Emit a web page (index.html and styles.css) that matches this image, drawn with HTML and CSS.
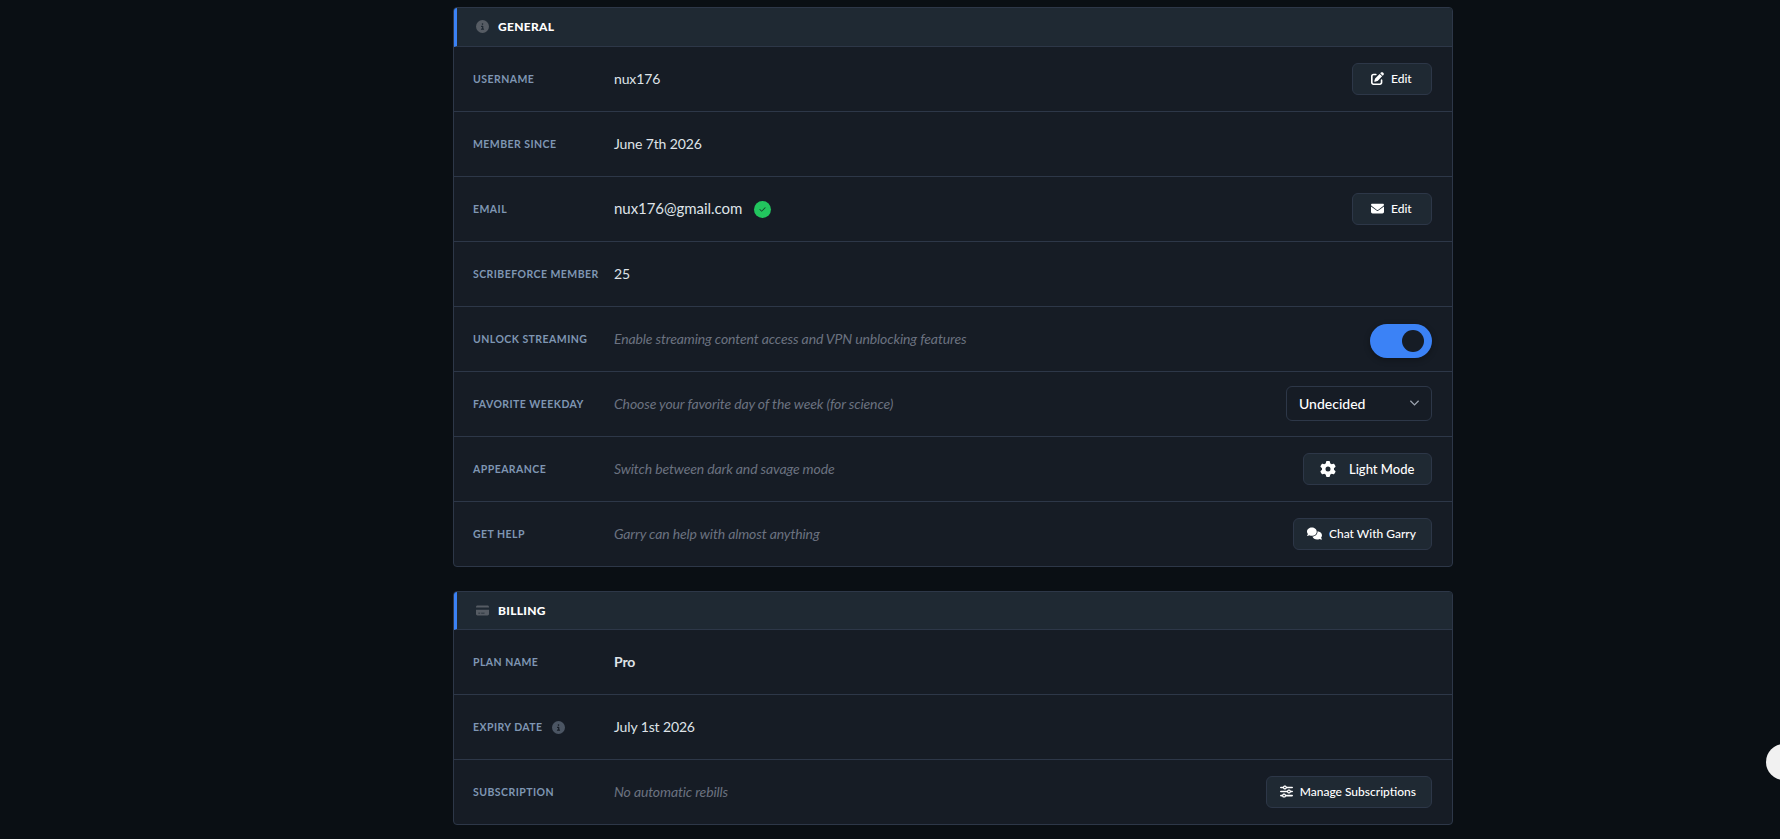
FILE: index.html
```html
<!DOCTYPE html>
<html lang="en">
<head>
    <meta charset="UTF-8">
    <meta name="viewport" content="width=device-width, initial-scale=1.0">
    <title>Account</title>
    <link rel="stylesheet" href="styles.css">
</head>
<body>

    <main class="page">

        <!-- General -->
        <section class="card">
            <header class="card-head">
                <svg class="head-icon" viewBox="0 0 512 512"><path d="M256 512A256 256 0 1 0 256 0a256 256 0 1 0 0 512zM216 336h24V272H216c-13.3 0-24-10.7-24-24s10.7-24 24-24h48c13.3 0 24 10.7 24 24v88h8c13.3 0 24 10.7 24 24s-10.7 24-24 24H216c-13.3 0-24-10.7-24-24s10.7-24 24-24zm40-208a32 32 0 1 1 0 64 32 32 0 1 1 0-64z"/></svg>
                <h2>General</h2>
            </header>
            <div class="row">
                <span class="label">Username</span>
                <span class="value">nux176</span>
                <button class="btn btn-edit" type="button">
                    <svg class="btn-icon" viewBox="0 0 512 512"><path d="M471.6 21.7c-21.9-21.9-57.3-21.9-79.2 0L362.3 51.7l97.9 97.9 30.1-30.1c21.9-21.9 21.9-57.3 0-79.2L471.6 21.7zm-299.2 220c-6.1 6.1-10.8 13.6-13.5 21.9l-29.6 88.8c-2.9 8.6-.6 18.1 5.8 24.6s15.9 8.7 24.6 5.8l88.8-29.6c8.2-2.7 15.7-7.4 21.9-13.5L437.7 172.3 339.7 74.3 172.4 241.7zM96 64C43 64 0 107 0 160V416c0 53 43 96 96 96H352c53 0 96-43 96-96V320c0-17.7-14.3-32-32-32s-32 14.3-32 32v96c0 17.7-14.3 32-32 32H96c-17.7 0-32-14.3-32-32V160c0-17.7 14.3-32 32-32h96c17.7 0 32-14.3 32-32s-14.3-32-32-32H96z"/></svg>
                    Edit
                </button>
            </div>
            <div class="row">
                <span class="label">Member Since</span>
                <span class="value">June 7th 2026</span>
            </div>
            <div class="row">
                <span class="label">Email</span>
                <span class="value email">nux176@gmail.com</span>
                <span class="verified">
                    <svg viewBox="0 0 512 512"><path d="M470.6 105.4c12.5 12.5 12.5 32.8 0 45.3l-256 256c-12.5 12.5-32.8 12.5-45.3 0l-128-128c-12.5-12.5-12.5-32.8 0-45.3s32.8-12.5 45.3 0L192 338.7 425.4 105.4c12.5-12.5 32.8-12.5 45.3 0z"/></svg>
                </span>
                <button class="btn btn-edit" type="button">
                    <svg class="btn-icon" viewBox="0 0 512 512"><path d="M48 64C21.5 64 0 85.5 0 112c0 15.1 7.1 29.3 19.2 38.4L236.8 313.6c11.4 8.5 27 8.5 38.4 0L492.8 150.4c12.1-9.1 19.2-23.3 19.2-38.4c0-26.5-21.5-48-48-48H48zM0 176V384c0 35.3 28.7 64 64 64H448c35.3 0 64-28.7 64-64V176L294.4 339.2c-22.8 17.1-54 17.1-76.8 0L0 176z"/></svg>
                    Edit
                </button>
            </div>
            <div class="row">
                <span class="label">Scribeforce Member</span>
                <span class="value">25</span>
            </div>
            <div class="row">
                <span class="label">Unlock Streaming</span>
                <span class="hint">Enable streaming content access and VPN unblocking features</span>
                <span class="toggle"><span class="knob"></span></span>
            </div>
            <div class="row">
                <span class="label">Favorite Weekday</span>
                <span class="hint">Choose your favorite day of the week (for science)</span>
                <div class="select-wrap">
                    <select class="select">
                        <option>Undecided</option>
                    </select>
                    <svg class="chevron" viewBox="0 0 12 8"><path d="M1.5 1.5 6 6l4.500-4.500"/></svg>
                </div>
            </div>
            <div class="row">
                <span class="label">Appearance</span>
                <span class="hint">Switch between dark and savage mode</span>
                <button class="btn btn-light" type="button">
                    <svg class="btn-icon gear" viewBox="0 0 512 512"><path d="M495.9 166.6c3.2 8.7 .5 18.4-6.4 24.6l-43.3 39.4c1.1 8.3 1.7 16.8 1.7 25.4s-.6 17.1-1.7 25.4l43.3 39.4c6.9 6.2 9.6 15.9 6.4 24.6c-4.4 11.9-9.7 23.3-15.8 34.3l-4.7 8.1c-6.6 11-14 21.4-22.1 31.2c-5.9 7.2-15.7 9.6-24.5 6.8l-55.7-17.7c-13.4 10.3-28.2 18.9-44 25.4l-12.5 57.1c-2 9.1-9 16.3-18.2 17.8c-13.8 2.3-28 3.5-42.5 3.5s-28.7-1.2-42.5-3.5c-9.2-1.5-16.2-8.7-18.2-17.8l-12.5-57.1c-15.8-6.5-30.6-15.1-44-25.4L83.1 425.9c-8.8 2.8-18.6 .3-24.5-6.8c-8.1-9.8-15.5-20.2-22.1-31.2l-4.7-8.1c-6.1-11-11.4-22.4-15.8-34.3c-3.2-8.7-.5-18.4 6.4-24.6l43.3-39.4C64.6 273.1 64 264.6 64 256s.6-17.1 1.7-25.4L22.4 191.2c-6.9-6.2-9.6-15.9-6.4-24.6c4.4-11.9 9.7-23.3 15.8-34.3l4.7-8.1c6.6-11 14-21.4 22.1-31.2c5.9-7.2 15.7-9.6 24.5-6.8l55.7 17.7c13.4-10.3 28.2-18.9 44-25.4l12.5-57.1c2-9.1 9-16.3 18.2-17.8C227.3 1.2 241.5 0 256 0s28.7 1.2 42.5 3.5c9.2 1.5 16.2 8.7 18.2 17.8l12.5 57.1c15.8 6.5 30.6 15.1 44 25.4l55.7-17.7c8.8-2.8 18.6-.3 24.5 6.8c8.1 9.8 15.5 20.2 22.1 31.2l4.7 8.1c6.1 11 11.4 22.4 15.8 34.3zM256 336a80 80 0 1 0 0-160 80 80 0 1 0 0 160z"/></svg>
                    Light Mode
                </button>
            </div>
            <div class="row">
                <span class="label">Get Help</span>
                <span class="hint">Garry can help with almost anything</span>
                <button class="btn btn-wide" type="button">
                    <svg class="btn-icon comments" viewBox="0 0 640 512"><path d="M208 352c114.900 0 208-78.800 208-176S322.900 0 208 0S0 78.800 0 176c0 38.600 14.700 74.300 39.600 103.400c-3.500 9.400-8.700 17.700-14.200 24.700c-4.800 6.200-9.700 11-13.300 14.300c-1.800 1.600-3.300 2.900-4.300 3.700c-.5 .4-.9 .7-1.100 .8l-.2 .2C1 327.200-1.400 334.400 .8 340.900S9.100 352 16 352c21.800 0 43.800-5.600 62.100-12.500c9.200-3.500 17.800-7.400 25.300-11.400C134.100 343.300 169.800 352 208 352zM448 176c0 112.300-99.100 196.900-216.500 207C255.800 457.400 336.400 512 432 512c38.200 0 73.900-8.700 104.700-23.900c7.500 4 16 7.900 25.200 11.400c18.300 6.900 40.300 12.500 62.100 12.500c6.900 0 13.100-4.500 15.200-11.100c2.100-6.600-.2-13.800-5.800-17.900l-.2-.2c-.2-.2-.6-.4-1.100-.8c-1-.8-2.500-2-4.300-3.700c-3.600-3.300-8.500-8.100-13.300-14.300c-5.500-7-10.700-15.400-14.200-24.700c24.900-29 39.600-64.700 39.600-103.400c0-92.800-84.900-168.900-192.600-175.500c.4 5.100 .6 10.300 .6 15.500z"/></svg>
                    Chat With Garry
                </button>
            </div>
        </section>

        <!-- Billing -->
        <section class="card">
            <header class="card-head">
                <svg class="head-icon" viewBox="0 0 576 512"><path d="M64 32C28.700 32 0 60.700 0 96v32H576V96c0-35.300-28.700-64-64-64H64zM576 224H0V416c0 35.300 28.700 64 64 64H512c35.300 0 64-28.700 64-64V224zM112 352h64c8.800 0 16 7.200 16 16s-7.200 16-16 16H112c-8.800 0-16-7.200-16-16s7.200-16 16-16zm112 16c0-8.800 7.200-16 16-16H368c8.800 0 16 7.200 16 16s-7.200 16-16 16H240c-8.800 0-16-7.200-16-16z"/></svg>
                <h2>Billing</h2>
            </header>
            <div class="row">
                <span class="label">Plan Name</span>
                <span class="value plan">Pro</span>
            </div>
            <div class="row">
                <span class="label">Expiry Date
                    <svg class="label-icon" viewBox="0 0 512 512"><path d="M256 512A256 256 0 1 0 256 0a256 256 0 1 0 0 512zM216 336h24V272H216c-13.300 0-24-10.700-24-24s10.700-24 24-24h48c13.300 0 24 10.700 24 24v88h8c13.300 0 24 10.700 24 24s-10.700 24-24 24H216c-13.300 0-24-10.700-24-24s10.700-24 24-24zm40-208a32 32 0 1 1 0 64 32 32 0 1 1 0-64z"/></svg>
                </span>
                <span class="value">July 1st 2026</span>
            </div>
            <div class="row">
                <span class="label">Subscription</span>
                <span class="hint">No automatic rebills</span>
                <button class="btn btn-wide" type="button">
                    <svg class="btn-icon" viewBox="0 0 512 512"><path d="M0 416c0 17.700 14.300 32 32 32l54.700 0c12.300 28.300 40.500 48 73.300 48s61-19.700 73.300-48L480 448c17.700 0 32-14.300 32-32s-14.300-32-32-32l-246.700 0c-12.300-28.300-40.500-48-73.300-48s-61 19.700-73.300 48L32 384c-17.700 0-32 14.300-32 32zm128 0a32 32 0 1 1 64 0 32 32 0 1 1 -64 0zM320 256a32 32 0 1 1 64 0 32 32 0 1 1 -64 0zm32-80c-32.800 0-61 19.700-73.300 48L32 224c-17.700 0-32 14.300-32 32s14.300 32 32 32l246.700 0c12.300 28.300 40.500 48 73.300 48s61-19.700 73.300-48l54.700 0c17.700 0 32-14.300 32-32s-14.300-32-32-32l-54.700 0c-12.300-28.300-40.500-48-73.300-48zM192 128a32 32 0 1 1 0-64 32 32 0 1 1 0 64zm73.300-64C253 35.700 224.800 16 192 16s-61 19.700-73.300 48L32 64C14.300 64 0 78.300 0 96s14.300 32 32 32l86.700 0c12.300 28.300 40.500 48 73.300 48s61-19.700 73.300-48L480 128c17.700 0 32-14.300 32-32s-14.300-32-32-32L265.300 64z"/></svg>
                    Manage Subscriptions
                </button>
            </div>
        </section>

    </main>

    <!-- floating widget, mostly off screen -->
    <div class="float-widget"></div>

</body>
</html>
```
FILE: styles.css
```css
html, body {
    height: 100%;
    overflow: hidden;
}
body {
    margin: 0;
    background: #0a0f14;
    font-family: Lato, "Liberation Sans", sans-serif;
    color: #e5e7eb;
}
.page {
    width: 1000px;
    margin-left: 453px;
    padding-top: 7px;
    display: flex;
    flex-direction: column;
    gap: 24px;
}
.card {
    background: #161c25;
    border: 1px solid #2d3748;
    border-radius: 4px;
    overflow: hidden;
}
.card-head {
    box-sizing: border-box;
    height: 39px;
    display: flex;
    align-items: center;
    gap: 9px;
    padding: 0 0 2px 19px;
    background: #1f2933;
    border-left: 3px solid #3b82f6;
    border-bottom: 1px solid #2d3748;
}
.card + .card .card-head {
    height: 38px;
    padding-bottom: 1px;
}
.card-head h2 {
    margin: 0;
    font-size: 12px;
    font-weight: 900;
    letter-spacing: 0.3px;
    text-transform: uppercase;
    color: #fff;
}
.head-icon {
    width: 13px;
    height: 13px;
    fill: #565c64;
}
.row {
    height: 64px;
    display: flex;
    align-items: center;
    padding: 0 20px 0 19px;
    border-bottom: 1px solid #2d3748;
}
.row:last-child {
    border-bottom: none;
}
.label {
    width: 141px;
    flex: none;
    display: flex;
    align-items: center;
    gap: 9px;
    font-size: 10.5px;
    font-weight: 700;
    letter-spacing: 0.45px;
    text-transform: uppercase;
    color: #7f96b3;
}
.label-icon {
    width: 13px;
    height: 13px;
    fill: #4b5563;
}
.value {
    margin-bottom: 2px;
    font-size: 14px;
    letter-spacing: -0.13px;
    color: #dfe3e8;
}
.email {
    font-size: 15px;
    letter-spacing: -0.05px;
}
.plan {
    font-weight: 700;
}
.hint {
    margin-bottom: 2px;
    font-size: 14px;
    font-style: italic;
    letter-spacing: -0.13px;
    color: #6b7280;
}
.verified {
    width: 17px;
    height: 17px;
    margin-left: 12px;
    border-radius: 50%;
    background: #22c55e;
    display: flex;
    align-items: center;
    justify-content: center;
}
.verified svg {
    width: 7px;
    height: 7px;
    fill: #14432a;
}
.btn {
    margin-left: auto;
    height: 32px;
    display: flex;
    align-items: center;
    padding-bottom: 2px;
    background: #1f2933;
    border: 1px solid #2d3748;
    border-radius: 6px;
    color: #fff;
    font-family: inherit;
    font-size: 12px;
    font-weight: 500;
    cursor: pointer;
}
.btn-edit {
    width: 80px;
    padding-left: 18px;
    padding-right: 0;
    gap: 7px;
}
.btn-light {
    width: 129px;
    padding-left: 16px;
    padding-right: 0;
    gap: 13px;
    font-size: 13px;
}
.btn-wide {
    padding-left: 13px;
    padding-right: 15px;
    gap: 7px;
}
.btn-icon {
    width: 13px;
    height: 13px;
    fill: #fff;
    flex: none;
}
.gear {
    width: 16px;
    height: 16px;
}
.comments {
    width: 15px;
}
.toggle {
    margin-left: auto;
    margin-top: 3px;
    width: 62px;
    height: 34px;
    border-radius: 17px;
    background: #3b82f6;
    box-shadow: 0 2px 6px rgba(0, 0, 0, 0.3);
    display: flex;
    align-items: center;
    justify-content: flex-end;
    padding-right: 8px;
    box-sizing: border-box;
}
.knob {
    width: 22px;
    height: 22px;
    border-radius: 50%;
    background: #161c25;
}
.select-wrap {
    margin-left: auto;
    margin-bottom: 1px;
    position: relative;
    width: 146px;
    height: 35px;
}
.select {
    width: 100%;
    height: 100%;
    padding: 0 12px;
    appearance: none;
    background: #161c25;
    border: 1px solid #2d3748;
    border-radius: 6px;
    color: #fff;
    font-family: inherit;
    font-size: 14px;
    font-weight: 500;
}
.chevron {
    position: absolute;
    right: 12px;
    top: 13px;
    width: 11px;
    height: 8px;
    fill: none;
    stroke: #9ca3af;
    stroke-width: 1.4;
}
.float-widget {
    position: fixed;
    left: 1766px;
    top: 744px;
    width: 36px;
    height: 36px;
    border-radius: 50%;
    background: #f1f1f1;
}
```
